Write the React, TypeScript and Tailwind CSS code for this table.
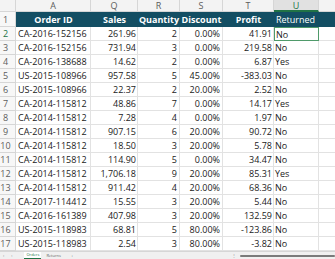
import React from 'react'

const rows: [string, string, string, string, string, string][] = [
  ['CA-2016-152156', '261.96', '2', '0.00%', '41.91', 'No'],
  ['CA-2016-152156', '731.94', '3', '0.00%', '219.58', 'No'],
  ['CA-2016-138688', '14.62', '2', '0.00%', '6.87', 'Yes'],
  ['US-2015-108966', '957.58', '5', '45.00%', '-383.03', 'No'],
  ['US-2015-108966', '22.37', '2', '20.00%', '2.52', 'No'],
  ['CA-2014-115812', '48.86', '7', '0.00%', '14.17', 'Yes'],
  ['CA-2014-115812', '7.28', '4', '0.00%', '1.97', 'No'],
  ['CA-2014-115812', '907.15', '6', '20.00%', '90.72', 'No'],
  ['CA-2014-115812', '18.50', '3', '20.00%', '5.78', 'No'],
  ['CA-2014-115812', '114.90', '5', '0.00%', '34.47', 'No'],
  ['CA-2014-115812', '1,706.18', '9', '20.00%', '85.31', 'Yes'],
  ['CA-2014-115812', '911.42', '4', '20.00%', '68.36', 'No'],
  ['CA-2017-114412', '15.55', '3', '20.00%', '5.44', 'No'],
  ['CA-2016-161389', '407.98', '3', '20.00%', '132.59', 'No'],
  ['US-2015-118983', '68.81', '5', '80.00%', '-123.86', 'No'],
  ['US-2015-118983', '2.54', '3', '80.00%', '-3.82', 'No'],
]

const cell = 'border-r border-b border-[#e2e2e2] overflow-hidden whitespace-nowrap'

export default function App() {
  return (
    <div
      className="w-[335px] h-[259px] overflow-hidden bg-white flex flex-col text-[9px] text-[#1a1a1a]"
      style={{ fontFamily: '"Open Sans", "Liberation Sans", sans-serif' }}
    >
      {/* column letters */}
      <div className="flex h-[12px] shrink-0 bg-[#f3f3f3] text-[#5c5c5c] leading-[12px]">
        <div className="w-[16px] border-r border-b border-[#d6d6d6]" />
        <div className="w-[75px] text-center border-r border-b border-[#d6d6d6]">A</div>
        <div className="w-[47px] text-center border-r border-b border-[#d6d6d6]">Q</div>
        <div className="w-[42px] text-center border-r border-b border-[#d6d6d6]">R</div>
        <div className="w-[43px] text-center border-r border-b border-[#d6d6d6]">S</div>
        <div className="w-[51px] text-center border-r border-b border-[#d6d6d6]">T</div>
        <div className="w-[45px] text-center bg-[#e1e1e1] text-[#217346] border-r border-[#d6d6d6] border-b-2 border-b-[#217346]">U</div>
        <div className="flex-1 border-b border-[#d6d6d6]" />
      </div>

      {/* header row */}
      <div className="flex h-[15px] shrink-0 leading-[15px]">
        <div className="w-[16px] pr-[4px] text-center text-[#5c5c5c] bg-[#f7f7f7] border-r border-b border-[#d6d6d6]">1</div>
        <div className="flex flex-1 bg-[#134e63] text-white">
          <div className="w-[75px] text-center font-bold">Order ID</div>
          <div className="w-[47px] text-center font-bold">Sales</div>
          <div className="w-[42px] text-center font-bold">Quantity</div>
          <div className="w-[43px] text-center font-bold">Discount</div>
          <div className="w-[51px] text-center font-bold">Profit</div>
          <div className="w-[45px] pl-[2px]">Returned</div>
        </div>
      </div>

      {rows.map((r, i) => (
        <div key={i} className="flex h-[14px] shrink-0 leading-[13px]">
          <div
            className={`w-[16px] pr-[4px] text-center bg-[#f7f7f7] border-r border-b border-[#d6d6d6] ${
              i === 0 ? 'text-[#217346]' : 'text-[#5c5c5c]'
            }`}
          >
            {i + 2}
          </div>
          <div className={`w-[75px] pl-[2px] ${cell}`}>{r[0]}</div>
          <div className={`w-[47px] pr-[1px] text-right ${cell}`}>{r[1]}</div>
          <div className={`w-[42px] pr-[2px] text-right ${cell}`}>{r[2]}</div>
          <div className={`w-[43px] pr-[2px] text-right ${cell}`}>{r[3]}</div>
          <div className={`w-[51px] pr-[1px] text-right ${cell}`}>{r[4]}</div>
          <div
            className={`w-[45px] pl-[1px] whitespace-nowrap ${
              i === 0 ? 'border border-[#4f9a6a]' : 'border-r border-b border-[#e2e2e2]'
            }`}
          >
            {r[5]}
          </div>
          <div className="flex-1 border-b border-[#e2e2e2]" />
        </div>
      ))}

      {/* sheet tabs */}
      <div className="flex-1 flex items-center bg-[#f0f0f0] border-t border-[#d6d6d6] text-[4px] text-[#666]">
        <span className="ml-[3px]">‹</span>
        <span className="ml-[7px]">›</span>
        <span className="ml-[12px] px-[2px] bg-white text-[#217346] border-b border-[#217346]">Orders</span>
        <span className="ml-[5px]">Returns</span>
        <span className="ml-[10px]">+</span>
        <div className="flex-1" />
        <span className="mr-[4px] text-[#999]">⋮</span>
        <div className="w-[95px] h-[2px] bg-[#7a7a7a] rounded-full" />
      </div>
    </div>
  )
}
